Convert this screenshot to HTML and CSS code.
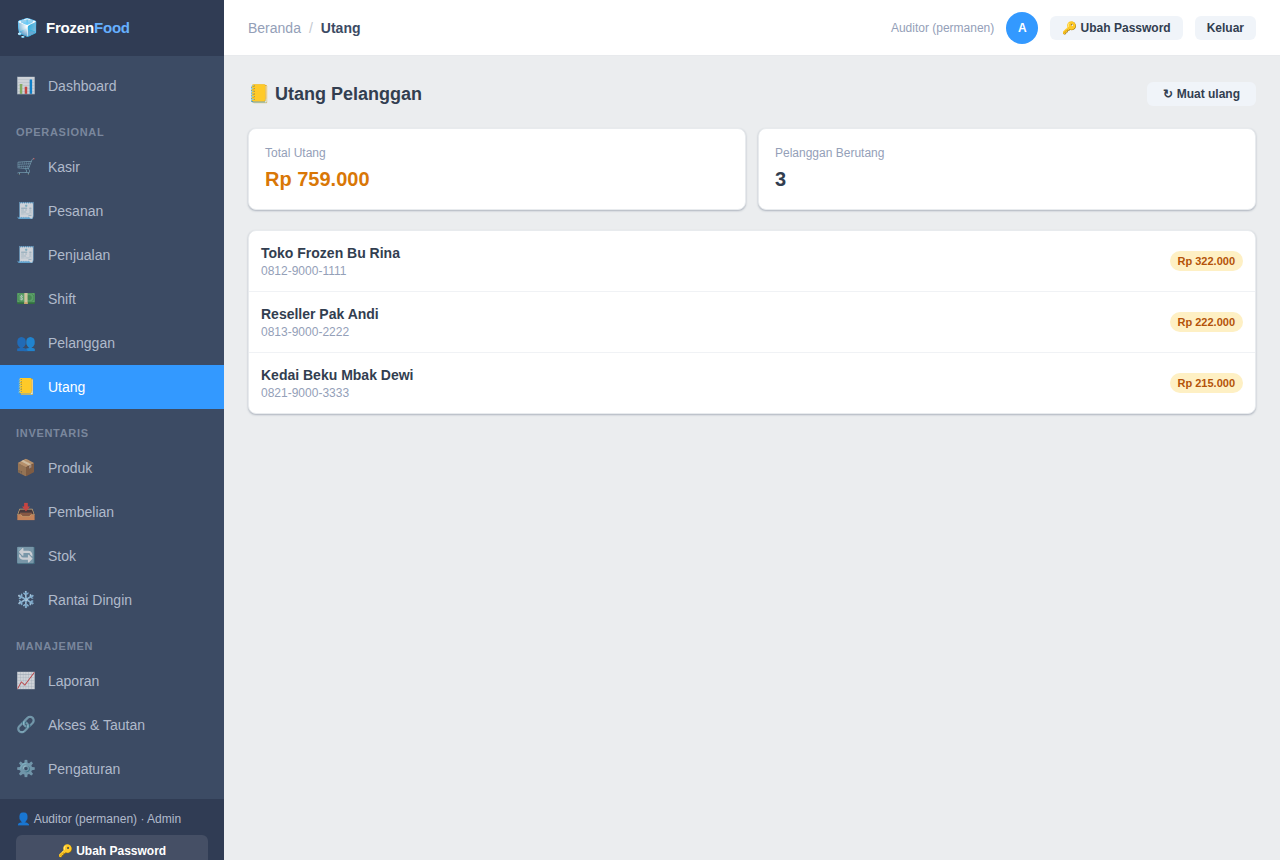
FILE: index.html
```html
<!DOCTYPE html>
<html lang="id">
<head>
    <meta charset="UTF-8">
    <meta name="viewport" content="width=device-width, initial-scale=1.0">
    <title>FrozenFood - Utang</title>
    <link rel="stylesheet" href="styles.css">
</head>
<body>
    <div class="app">
        <aside class="sidebar">
            <div class="brand">
                <span class="brand-icon">🧊</span>
                <span class="brand-name">Frozen<span>Food</span></span>
            </div>

            <nav class="nav">
                <a class="nav-item" href="#dashboard"><span class="nav-icon">📊</span>Dashboard</a>

                <div class="nav-title">Operasional</div>
                <a class="nav-item" href="#kasir"><span class="nav-icon">🛒</span>Kasir</a>
                <a class="nav-item" href="#pesanan"><span class="nav-icon">🧾</span>Pesanan</a>
                <a class="nav-item" href="#penjualan"><span class="nav-icon">🧾</span>Penjualan</a>
                <a class="nav-item" href="#shift"><span class="nav-icon">💵</span>Shift</a>
                <a class="nav-item" href="#pelanggan"><span class="nav-icon">👥</span>Pelanggan</a>
                <a class="nav-item active" href="#utang"><span class="nav-icon">📒</span>Utang</a>

                <div class="nav-title">Inventaris</div>
                <a class="nav-item" href="#produk"><span class="nav-icon">📦</span>Produk</a>
                <a class="nav-item" href="#pembelian"><span class="nav-icon">📥</span>Pembelian</a>
                <a class="nav-item" href="#stok"><span class="nav-icon">🔄</span>Stok</a>
                <a class="nav-item" href="#rantai"><span class="nav-icon">❄️</span>Rantai Dingin</a>

                <div class="nav-title">Manajemen</div>
                <a class="nav-item" href="#laporan"><span class="nav-icon">📈</span>Laporan</a>
                <a class="nav-item" href="#akses"><span class="nav-icon">🔗</span>Akses &amp; Tautan</a>
                <a class="nav-item" href="#pengaturan"><span class="nav-icon">⚙️</span>Pengaturan</a>
            </nav>

            <div class="sidebar-footer">
                <div class="sidebar-user">👤 Auditor (permanen) · Admin</div>
                <button type="button" class="btn-side">🔑 Ubah Password</button>
            </div>
        </aside>

        <div class="main">
            <header class="topbar">
                <div class="breadcrumb">
                    <a href="#beranda">Beranda</a>
                    <span class="sep">/</span>
                    <strong>Utang</strong>
                </div>
                <div class="topbar-right">
                    <span class="user-name">Auditor (permanen)</span>
                    <span class="avatar">A</span>
                    <button type="button" class="btn">🔑 Ubah Password</button>
                    <button type="button" class="btn">Keluar</button>
                </div>
            </header>

            <main class="content">
                <div class="page-head">
                    <h1>📒 Utang Pelanggan</h1>
                    <button type="button" class="btn btn-wide">↻ Muat ulang</button>
                </div>

                <div class="stats">
                    <div class="card stat">
                        <div class="stat-label">Total Utang</div>
                        <div class="stat-value warning">Rp 759.000</div>
                    </div>
                    <div class="card stat">
                        <div class="stat-label">Pelanggan Berutang</div>
                        <div class="stat-value">3</div>
                    </div>
                </div>

                <ul class="card debt-list">
                    <li class="debt-row">
                        <div>
                            <div class="debt-name">Toko Frozen Bu Rina</div>
                            <div class="debt-phone">0812-9000-1111</div>
                        </div>
                        <span class="badge">Rp 322.000</span>
                    </li>
                    <li class="debt-row">
                        <div>
                            <div class="debt-name">Reseller Pak Andi</div>
                            <div class="debt-phone">0813-9000-2222</div>
                        </div>
                        <span class="badge">Rp 222.000</span>
                    </li>
                    <li class="debt-row">
                        <div>
                            <div class="debt-name">Kedai Beku Mbak Dewi</div>
                            <div class="debt-phone">0821-9000-3333</div>
                        </div>
                        <span class="badge">Rp 215.000</span>
                    </li>
                </ul>
            </main>
        </div>
    </div>
</body>
</html>
```
FILE: styles.css
```css
:root {
    --sidebar: #3c4b64;
    --sidebar-dark: #303c54;
    --sidebar-text: #b0bacb;
    --primary: #3399ff;
    --background: #ebedef;
    --text: #323e50;
    --muted: #94a0b8;
    --soft: #f0f4f9;
}

* {
    margin: 0;
    padding: 0;
    box-sizing: border-box;
}

body {
    background: var(--background);
    color: var(--text);
    font-family: "Liberation Sans", Arial, sans-serif;
    font-size: 14px;
    line-height: 20px;
}

a {
    color: inherit;
    text-decoration: none;
}

button {
    font: inherit;
    border: none;
    cursor: pointer;
}

.app {
    display: flex;
    min-height: 100vh;
}

/* Sidebar */
.sidebar {
    position: sticky;
    top: 0;
    display: flex;
    flex-direction: column;
    flex-shrink: 0;
    width: 224px;
    height: 100vh;
    overflow-y: auto;
    scrollbar-width: none;
    background: var(--sidebar);
}

.brand {
    display: flex;
    align-items: center;
    flex-shrink: 0;
    gap: 8px;
    height: 56px;
    padding: 0 16px;
    background: var(--sidebar-dark);
    color: #fff;
}

.brand-icon {
    font-size: 18px;
}

.brand-name {
    font-size: 15px;
    font-weight: 700;
    letter-spacing: -0.2px;
}

.brand-name span {
    color: #66b0ff;
}

.nav {
    flex: 1 0 auto;
    padding: 8px 0;
}

.nav-title {
    padding: 16px 16px 4px;
    color: #7a879d;
    font-size: 11px;
    font-weight: 700;
    line-height: 17px;
    letter-spacing: 0.7px;
    text-transform: uppercase;
}

.nav-item {
    display: flex;
    align-items: center;
    gap: 12px;
    height: 44px;
    padding: 0 16px;
    color: var(--sidebar-text);
}

.nav-item:hover {
    background: rgba(255, 255, 255, 0.05);
}

.nav-icon {
    width: 20px;
    font-size: 16px;
    text-align: center;
    opacity: 0.75;
}

.nav-item.active {
    background: var(--primary);
    color: #fff;
}

.nav-item.active .nav-icon {
    opacity: 1;
}

.sidebar-footer {
    flex-shrink: 0;
    padding: 12px 16px;
    background: var(--sidebar-dark);
}

.sidebar-user {
    margin-bottom: 8px;
    color: var(--sidebar-text);
    font-size: 12px;
    line-height: 16px;
}

.btn-side {
    width: 100%;
    height: 32px;
    border-radius: 6px;
    background: rgba(255, 255, 255, 0.1);
    color: #fff;
    font-size: 12px;
    font-weight: 700;
}

/* Topbar */
.main {
    flex: 1;
    min-width: 0;
}

.topbar {
    display: flex;
    align-items: center;
    justify-content: space-between;
    height: 56px;
    padding: 0 24px;
    background: #fff;
    border-bottom: 1px solid #e8eaed;
}

.breadcrumb {
    display: flex;
    gap: 8px;
    color: var(--muted);
}

.breadcrumb .sep {
    color: #c4c9d0;
}

.breadcrumb strong {
    color: #3c4b64;
}

.topbar-right {
    display: flex;
    align-items: center;
    gap: 12px;
}

.user-name {
    color: var(--muted);
    font-size: 12px;
}

.avatar {
    width: 32px;
    height: 32px;
    border-radius: 50%;
    background: var(--primary);
    color: #fff;
    font-size: 12px;
    font-weight: 700;
    line-height: 32px;
    text-align: center;
}

.btn {
    height: 24px;
    padding: 0 12px;
    border-radius: 6px;
    background: var(--soft);
    color: var(--text);
    font-size: 12px;
    font-weight: 700;
}

.btn-wide {
    padding: 0 16px;
}

/* Content */
.content {
    padding: 24px;
}

.page-head {
    display: flex;
    align-items: center;
    justify-content: space-between;
    margin-bottom: 20px;
}

h1 {
    font-size: 18px;
    line-height: 28px;
}

.card {
    background: #fff;
    border: 1px solid #e8ebee;
    border-radius: 8px;
    box-shadow: 0 1px 2px rgba(60, 75, 100, 0.35);
}

.stats {
    display: grid;
    grid-template-columns: 1fr 1fr;
    gap: 12px;
    margin-bottom: 20px;
}

.stat {
    padding: 16px;
}

.stat-label {
    margin-bottom: 4px;
    color: var(--muted);
    font-size: 12px;
    line-height: 16px;
}

.stat-value {
    font-size: 20px;
    font-weight: 700;
    line-height: 28px;
}

.stat-value.warning {
    color: #d97706;
}

.debt-list {
    list-style: none;
}

.debt-row {
    display: flex;
    align-items: center;
    justify-content: space-between;
    padding: 12px;
    border-bottom: 1px solid #f0f2f5;
}

.debt-row:last-child {
    border-bottom: none;
}

.debt-name {
    font-weight: 700;
    line-height: 20px;
}

.debt-phone {
    color: var(--muted);
    font-size: 12px;
    line-height: 16px;
}

.badge {
    padding: 0 8px;
    border-radius: 10px;
    background: #fef0c4;
    color: #b45309;
    font-size: 11px;
    font-weight: 700;
    line-height: 20px;
}
```
